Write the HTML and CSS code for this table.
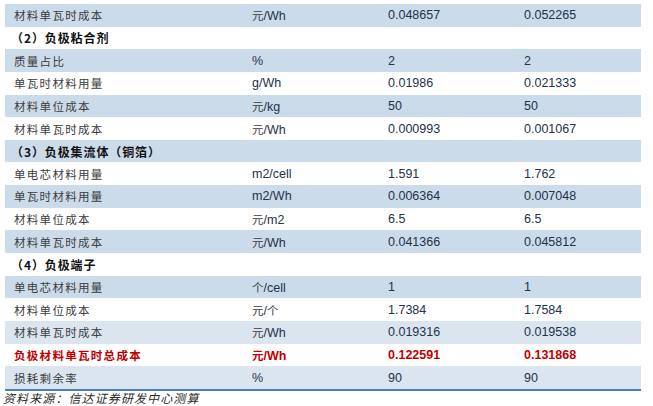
FILE: index.html
```html
<!DOCTYPE html>
<html lang="zh-CN">
<head>
<meta charset="utf-8">
<title>负极材料成本</title>
<link rel="stylesheet" href="styles.css">
</head>
<body>
<div class="page">
  <div class="table">
    <div class="row band"><div class="c name">材料单瓦时成本</div><div class="c unit"><span class="cj">元</span>/Wh</div><div class="c num">0.048657</div><div class="c num">0.052265</div></div>
    <div class="row"><div class="c sec">（2）负极粘合剂</div><div class="c"></div><div class="c"></div><div class="c"></div></div>
    <div class="row band"><div class="c name">质量占比</div><div class="c unit">%</div><div class="c num">2</div><div class="c num">2</div></div>
    <div class="row"><div class="c name">单瓦时材料用量</div><div class="c unit">g/Wh</div><div class="c num">0.01986</div><div class="c num">0.021333</div></div>
    <div class="row band"><div class="c name">材料单位成本</div><div class="c unit"><span class="cj">元</span>/kg</div><div class="c num">50</div><div class="c num">50</div></div>
    <div class="row"><div class="c name">材料单瓦时成本</div><div class="c unit"><span class="cj">元</span>/Wh</div><div class="c num">0.000993</div><div class="c num">0.001067</div></div>
    <div class="row band"><div class="c sec">（3）负极集流体（铜箔）</div><div class="c"></div><div class="c"></div><div class="c"></div></div>
    <div class="row"><div class="c name">单电芯材料用量</div><div class="c unit">m2/cell</div><div class="c num">1.591</div><div class="c num">1.762</div></div>
    <div class="row band"><div class="c name">单瓦时材料用量</div><div class="c unit">m2/Wh</div><div class="c num">0.006364</div><div class="c num">0.007048</div></div>
    <div class="row"><div class="c name">材料单位成本</div><div class="c unit"><span class="cj">元</span>/m2</div><div class="c num">6.5</div><div class="c num">6.5</div></div>
    <div class="row band"><div class="c name">材料单瓦时成本</div><div class="c unit"><span class="cj">元</span>/Wh</div><div class="c num">0.041366</div><div class="c num">0.045812</div></div>
    <div class="row"><div class="c sec">（4）负极端子</div><div class="c"></div><div class="c"></div><div class="c"></div></div>
    <div class="row band"><div class="c name">单电芯材料用量</div><div class="c unit"><span class="cj">个</span>/cell</div><div class="c num">1</div><div class="c num">1</div></div>
    <div class="row"><div class="c name">材料单位成本</div><div class="c unit"><span class="cj">元</span>/<span class="cj">个</span></div><div class="c num">1.7384</div><div class="c num">1.7584</div></div>
    <div class="row band light"><div class="c name">材料单瓦时成本</div><div class="c unit"><span class="cj">元</span>/Wh</div><div class="c num">0.019316</div><div class="c num">0.019538</div></div>
    <div class="row total"><div class="c name">负极材料单瓦时总成本</div><div class="c unit"><span class="cj">元</span>/Wh</div><div class="c num">0.122591</div><div class="c num">0.131868</div></div>
    <div class="row band light last"><div class="c name">损耗剩余率</div><div class="c unit">%</div><div class="c num">90</div><div class="c num">90</div></div>
  </div>
  <div class="source">资料来源：信达证券研发中心测算</div>
</div>
</body>
</html>
```

FILE: styles.css
```css
html, body {
  margin: 0;
  padding: 0;
  background: #ffffff;
}

.page {
  padding: 4px 0 0 5px;
  width: 636px;
}

.table {
  display: flex;
  flex-direction: column;
  border-bottom: 2px solid #4a7ebb;
}

.row {
  display: grid;
  grid-template-columns: 238px 136px 136px 126px;
  height: 22.65px;
  align-items: center;
}

.band {
  background: #ccdbea;
}

.band.light {
  background: #dbe5f0;
}

.c {
  padding-left: 9px;
  white-space: nowrap;
  font-family: "Liberation Sans", Arial, sans-serif;
  font-size: 12.5px;
  color: #23324a;
}

.name {
  font-family: "Noto Sans CJK SC", sans-serif;
  font-size: 11.5px;
  letter-spacing: 1.3px;
  color: #3c3c3c;
}

.sec {
  font-family: "Noto Sans CJK SC", sans-serif;
  font-size: 12px;
  font-weight: 700;
  letter-spacing: 0.9px;
  color: #111111;
  padding-left: 6px;
}

.cj {
  font-family: "Noto Sans CJK SC", sans-serif;
  font-size: 11.5px;
  color: #3c3c3c;
}

.total .c,
.total .cj {
  color: #c00000;
  font-weight: 700;
}

.source {
  font-family: "Noto Sans CJK SC", sans-serif;
  font-size: 12px;
  font-style: italic;
  letter-spacing: 1.1px;
  color: #2a2a2a;
  margin-left: -2px;
  line-height: 14px;
}
```
